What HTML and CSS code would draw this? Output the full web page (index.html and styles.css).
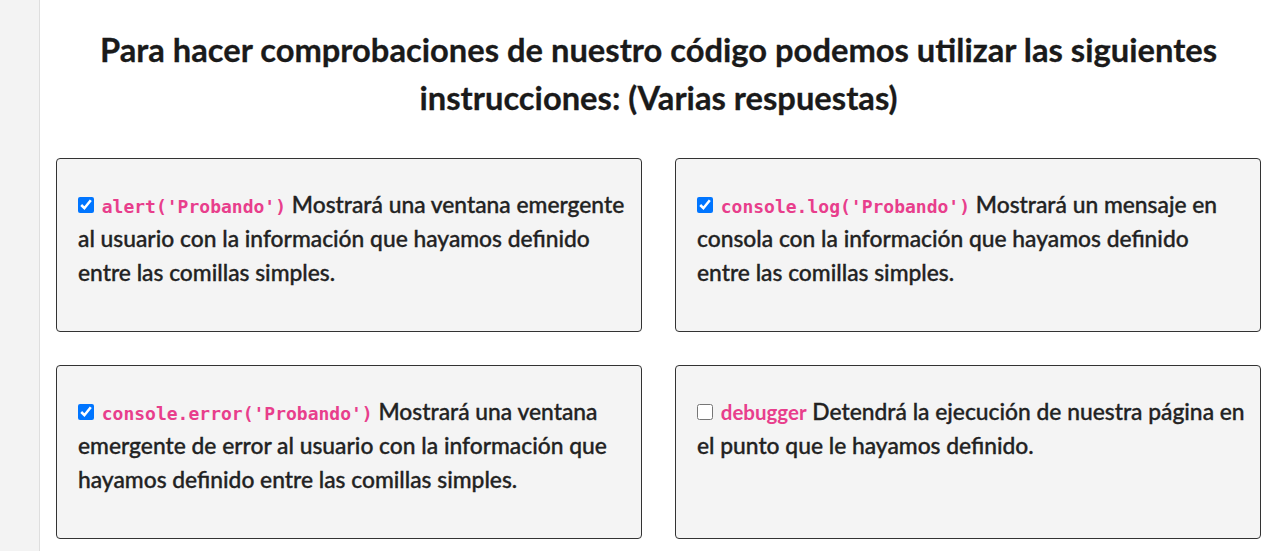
FILE: index.html
```html
<!DOCTYPE html>
<html lang="es">
<head>
<meta charset="utf-8">
<title>Pregunta</title>
<link rel="stylesheet" href="styles.css">
</head>
<body>
<div class="layout">
  <aside class="sidebar"></aside>
  <main class="main">
    <h1 class="title">Para hacer comprobaciones de nuestro código podemos utilizar las siguientes instrucciones: (Varias respuestas)</h1>
    <div class="answers">
      <label class="card"><span class="text"><input type="checkbox" checked> <code>alert('Probando')</code> Mostrará una ventana emergente al usuario con la información que hayamos definido entre las comillas simples.</span></label>
      <label class="card"><span class="text"><input type="checkbox" checked> <code>console.log('Probando')</code> Mostrará un mensaje en consola con la información que hayamos definido entre las comillas simples.</span></label>
      <label class="card"><span class="text"><input type="checkbox" checked> <code>console.error('Probando')</code> Mostrará una ventana emergente de error al usuario con la información que hayamos definido entre las comillas simples.</span></label>
      <label class="card"><span class="text"><input type="checkbox"> <code class="plain">debugger</code> Detendrá la ejecución de nuestra página en el punto que le hayamos definido.</span></label>
    </div>
  </main>
</div>
</body>
</html>
```
FILE: styles.css
```css
* { box-sizing: border-box; }
html, body { margin: 0; padding: 0; background: #fff; }
body {
  font-family: Lato, "Noto Sans", sans-serif;
  color: #1e1e1e;
  overflow: hidden;
}
.layout {
  display: flex;
  min-height: 551px;
}
.sidebar {
  width: 40px;
  flex: none;
  background: #f3f3f3;
  border-right: 1px solid #dedede;
}
.main {
  flex: 1;
  padding: 0 14px 0 16px;
}
.title {
  margin: 26px 0 0;
  text-align: center;
  font-size: 32.7px;
  line-height: 48px;
  font-weight: 700;
  color: #1a1a1a;
  -webkit-text-stroke: 0.3px #1a1a1a;
}
.answers {
  margin-top: 36px;
  display: grid;
  grid-template-columns: 586px 586px;
  gap: 33px;
}
.card {
  display: block;
  height: 174px;
  background: #f4f4f4;
  border: 1px solid #333;
  border-radius: 4px;
  padding: 28px 13px 0 21px;
  font-size: 22.8px;
  line-height: 34px;
  font-weight: 500;
  color: #222;
  -webkit-text-stroke: 0.35px #222;
}
.card input {
  width: 16px;
  height: 16px;
  margin: 0 2px 0 0;
  vertical-align: 0;
}
code {
  font-family: "DejaVu Sans Mono", monospace;
  font-size: 18px;
  line-height: 1;
  font-weight: 600;
  color: #e83e8c;
  -webkit-text-stroke: 0;
}
code.plain {
  font-family: Lato, sans-serif;
  font-size: 20.5px;
  font-weight: 700;
}
```
